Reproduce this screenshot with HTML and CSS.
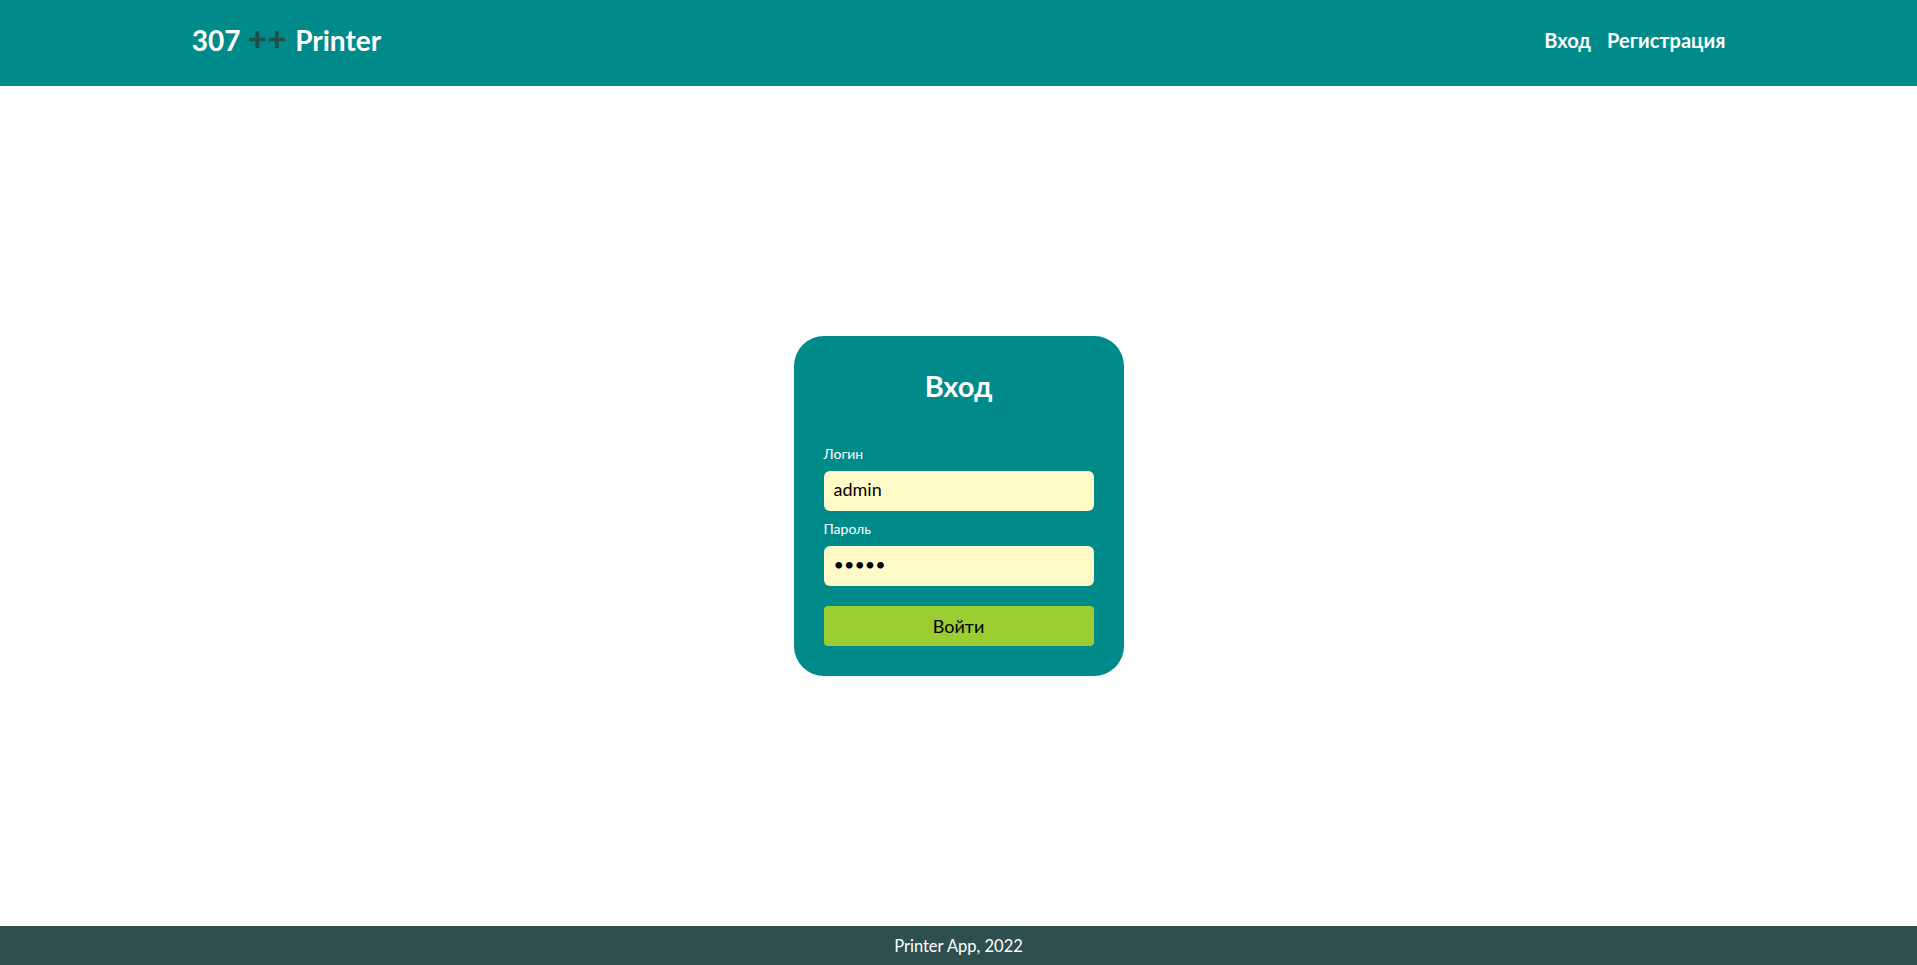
FILE: index.html
```html
<!DOCTYPE html>
<html lang="ru">
<head>
<meta charset="utf-8">
<title>Printer App</title>
<link rel="stylesheet" href="styles.css">
</head>
<body>
<header class="site-header">
  <div class="container header-inner">
    <a class="logo" href="#">307 <span class="logo-plus">++</span> Printer</a>
    <nav class="nav">
      <a class="nav-link" href="#">Вход</a>
      <a class="nav-link" href="#">Регистрация</a>
    </nav>
  </div>
</header>
<main class="main">
  <form class="card">
    <h2 class="card-title">Вход</h2>
    <label class="field-label" for="login">Логин</label>
    <input class="field-input" id="login" type="text" value="admin">
    <label class="field-label field-label-second" for="password">Пароль</label>
    <input class="field-input" id="password" type="password" value="admin">
    <button class="submit" type="button">Войти</button>
  </form>
</main>
<footer class="site-footer">Printer App, 2022</footer>
</body>
</html>
```
FILE: styles.css
```css
* { box-sizing: border-box; }
html, body { height: 100%; }
body {
  margin: 0;
  font-family: Lato, "Noto Sans", sans-serif;
  display: flex;
  flex-direction: column;
  min-height: 100vh;
  background: #fff;
}
.site-header {
  background: #008b8a;
  height: 86px;
  flex: none;
}
.container {
  width: 80%;
  margin: 0 auto;
}
.header-inner {
  height: 100%;
  display: flex;
  align-items: center;
  justify-content: space-between;
  padding-bottom: 6px;
}
.logo {
  color: #fff;
  font-weight: 700;
  font-size: 28px;
  text-decoration: none;
  word-spacing: 1px;
}
.logo-plus {
  color: #1f4f4d;
  font-size: 32px;
  line-height: 1;
  letter-spacing: 1px;
  -webkit-text-stroke: 0.6px #1f4f4d;
}
.nav { display: flex; gap: 16px; }
.nav-link {
  color: #fff;
  font-weight: 700;
  font-size: 20px;
  text-decoration: none;
}
.main {
  flex: 1;
  display: flex;
  align-items: center;
  justify-content: center;
}
.card {
  width: 330px;
  background: #008b8a;
  border-radius: 30px;
  padding: 33px 30px 30px;
  display: flex;
  flex-direction: column;
}
.card-title {
  margin: 0 0 43px;
  text-align: center;
  color: #fff;
  font-size: 29px;
  font-weight: 700;
  line-height: 1.16;
}
.field-label {
  color: #fff;
  font-size: 14px;
  line-height: 1.2;
  margin-bottom: 8px;
}
.field-label-second { margin-top: 10px; }
.field-input {
  height: 40px;
  border: none;
  border-radius: 6px;
  background: #fffac8;
  font-family: Lato, "Noto Sans", sans-serif;
  font-size: 18px;
  color: #000;
  padding: 0 10px 4px;
  outline: none;
}
.submit {
  margin-top: 20px;
  height: 40px;
  border: none;
  border-radius: 4px;
  background: #9acd32;
  font-family: Lato, "Noto Sans", sans-serif;
  font-size: 18px;
  color: #000;
  cursor: pointer;
}
.site-footer {
  flex: none;
  height: 39px;
  background: #2f4f4f;
  color: #fff;
  font-size: 16.5px;
  display: flex;
  align-items: center;
  justify-content: center;
}
```
